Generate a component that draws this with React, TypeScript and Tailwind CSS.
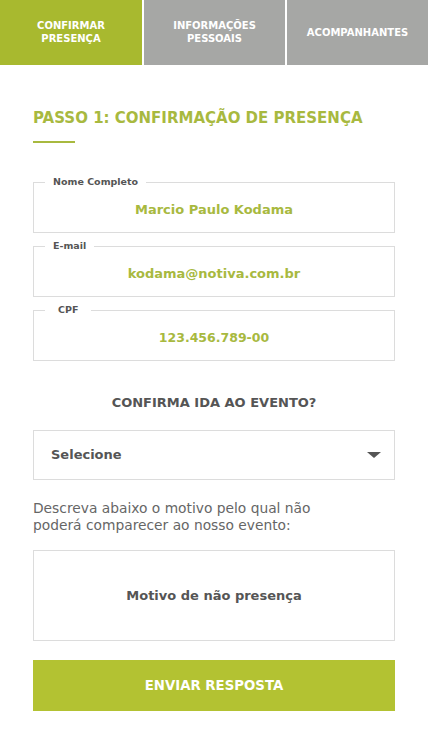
import React from "react";

const FONT = "font-['DejaVu_Sans',sans-serif]";

type Field = { id: string; label: string; value: string; legendPad: string; valueSize: string };

const FIELDS: Field[] = [
    { id: "nome", label: "Nome Completo", value: "Marcio Paulo Kodama", legendPad: "px-2", valueSize: "text-[13px]" },
    { id: "email", label: "E-mail", value: "kodama@notiva.com.br", legendPad: "px-2", valueSize: "text-[13px]" },
    { id: "cpf", label: "CPF", value: "123.456.789-00", legendPad: "px-[13px]", valueSize: "text-[12.5px]" },
];

function Tabs() {
    return (
        <div className="flex h-[65px] gap-[2px] bg-white">
            <div className="flex w-[142px] items-center justify-center bg-[#a8b92f] pb-[2px] text-center text-[10px] font-semibold leading-[13px] text-white">
                CONFIRMAR<br />PRESENÇA
            </div>
            <div className="flex flex-1 items-center justify-center bg-[#a6a7a5] pb-[2px] text-center text-[10px] font-semibold leading-[13px] text-white">
                INFORMAÇÕES<br />PESSOAIS
            </div>
            <div className="flex flex-1 items-center justify-center bg-[#a6a7a5] text-center text-[10px] font-semibold leading-[13px] text-white">
                ACOMPANHANTES
            </div>
        </div>
    );
}

export default function App() {
    return (
        <div className={`min-h-[753px] w-full bg-white ${FONT}`}>
            <Tabs />
            <div className="px-[33px]">
                <h1 className="mt-[43px] text-[15px] font-bold leading-[20px] text-[#a8b93f]">
                    PASSO 1: CONFIRMAÇÃO DE PRESENÇA
                </h1>
                <div className="mt-[13px] h-[2px] w-[42px] bg-[#a8b93f]" />

                <div className="mt-[33px] flex flex-col gap-[7px]">
                    {FIELDS.map((f) => (
                        <fieldset key={f.id} className="border border-[#dcdcdc]">
                            <legend className={`ml-[11px] ${f.legendPad} text-[9.5px] font-semibold leading-[12px] text-[#555]`}>
                                {f.label}
                            </legend>
                            <div className={`flex h-[44px] items-center justify-center ${f.valueSize} font-bold text-[#a8b93f]`}>
                                {f.value}
                            </div>
                        </fieldset>
                    ))}
                </div>

                <p className="mt-[34px] text-center text-[13px] font-bold leading-[16px] text-[#555]">
                    CONFIRMA IDA AO EVENTO?
                </p>

                <div className="mt-[19px] flex h-[50px] items-center justify-between border border-[#dcdcdc] pl-[17px] pr-[13px]">
                    <span className="text-[13px] font-bold text-[#555]">Selecione</span>
                    <svg width="14" height="6" viewBox="0 0 14 6">
                        <path d="M0 0 H14 L7 6 Z" fill="#555" />
                    </svg>
                </div>

                <p className="mt-5 text-[13.8px] leading-[17px] text-[#666]">
                    Descreva abaixo o motivo pelo qual não<br />poderá comparecer ao nosso evento:
                </p>

                <div className="mt-4 flex h-[91px] items-center justify-center border border-[#dcdcdc] text-[13px] font-bold text-[#555]">
                    Motivo de não presença
                </div>

                <button className="mt-[19px] flex h-[51px] w-full items-center justify-center bg-[#b3c232] text-[13.3px] font-bold text-white">
                    ENVIAR RESPOSTA
                </button>
            </div>
        </div>
    );
}
